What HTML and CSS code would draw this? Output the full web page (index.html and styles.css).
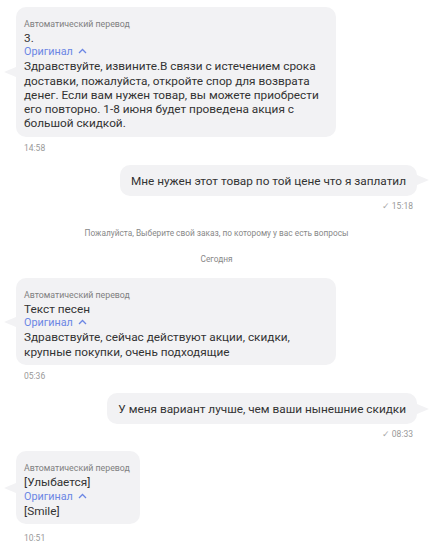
FILE: index.html
```html
<!DOCTYPE html>
<html lang="ru">
<head>
  <meta charset="UTF-8">
  <meta name="viewport" content="width=device-width, initial-scale=1">
  <title>Чат</title>
  <link rel="stylesheet" href="styles.css">
</head>
<body>

  <div class="chat">

    <div class="msg msg-in">
      <div class="bubble">
        <div class="caption">Автоматический перевод</div>
        <div class="text">3.</div>
        <div class="original">Оригинал <svg class="caret" width="9" height="6" viewBox="0 0 9 6"><path d="M1 5 L4.5 1.5 L8 5" fill="none" stroke="currentColor" stroke-width="1.3"/></svg></div>
        <div class="text">Здравствуйте, извините.В связи с истечением срока доставки, пожалуйста, откройте спор для возврата денег. Если вам нужен товар, вы можете приобрести его повторно. 1-8 июня будет проведена акция с большой скидкой.</div>
      </div>
      <div class="time">14:58</div>
    </div>

    <div class="msg msg-out">
      <div class="bubble">
        <div class="text">Мне нужен этот товар по той цене что я заплатил</div>
      </div>
      <div class="time"><span class="check">✓</span> 15:18</div>
    </div>

    <div class="system">Пожалуйста, Выберите свой заказ, по которому у вас есть вопросы</div>
    <div class="system day">Сегодня</div>

    <div class="msg msg-in">
      <div class="bubble">
        <div class="caption">Автоматический перевод</div>
        <div class="text">Текст песен</div>
        <div class="original">Оригинал <svg class="caret" width="9" height="6" viewBox="0 0 9 6"><path d="M1 5 L4.5 1.5 L8 5" fill="none" stroke="currentColor" stroke-width="1.3"/></svg></div>
        <div class="text">Здравствуйте, сейчас действуют акции, скидки, крупные покупки, очень подходящие</div>
      </div>
      <div class="time">05:36</div>
    </div>

    <div class="msg msg-out">
      <div class="bubble">
        <div class="text">У меня вариант лучше, чем ваши нынешние скидки</div>
      </div>
      <div class="time"><span class="check">✓</span> 08:33</div>
    </div>

    <div class="msg msg-in">
      <div class="bubble">
        <div class="caption">Автоматический перевод</div>
        <div class="text">[Улыбается]</div>
        <div class="original">Оригинал <svg class="caret" width="9" height="6" viewBox="0 0 9 6"><path d="M1 5 L4.5 1.5 L8 5" fill="none" stroke="currentColor" stroke-width="1.3"/></svg></div>
        <div class="text">[Smile]</div>
      </div>
      <div class="time">10:51</div>
    </div>

  </div>

</body>
</html>
```

FILE: styles.css
```css
body {
  margin: 0;
  background-color: #fff;
  font-family: Roboto, "Liberation Sans", sans-serif;
  color: #333;
}
.chat {
  display: flex;
  flex-direction: column;
  padding: 7px 17px 0 16px;
}
.msg {
  display: flex;
  flex-direction: column;
  max-width: 320px;
}
.msg-in {
  align-self: flex-start;
  align-items: flex-start;
}
.msg-out {
  align-self: flex-end;
  align-items: flex-end;
}
.bubble {
  position: relative;
  background-color: #f2f2f4;
  border-radius: 10px;
  padding: 11px 10px 6px 8px;
}
.bubble::before {
  content: "";
  position: absolute;
  top: 50%;
  margin-top: -5px;
  border-top: 5px solid transparent;
  border-bottom: 5px solid transparent;
}
.msg-in .bubble::before {
  left: -12px;
  border-right: 12px solid #f2f2f4;
}
.msg-out .bubble {
  padding: 9px 11px 8px 11px;
}
.msg-out .bubble::before {
  right: -12px;
  border-left: 12px solid #f2f2f4;
}
.caption {
  font-size: 8.8px;
  line-height: 13px;
  color: #808080;
}
.text {
  font-size: 11.8px;
  line-height: 14.3px;
  color: #333;
}
.original {
  font-size: 10.8px;
  line-height: 14px;
  color: #6b86e4;
}
.caret {
  margin-left: 2px;
  vertical-align: 1px;
}
.time {
  font-size: 8.5px;
  color: #999;
  margin: 6px 0 12px 8px;
}
.msg-in:last-child .time {
  margin-top: 9px;
}
.msg-out .time {
  margin: 5px 4px 12px 0;
}
.check {
  color: #aaa;
}
.system {
  align-self: center;
  font-size: 8.3px;
  color: #888;
  margin: 5px 0 16px;
}
.system.day {
  margin: 0 0 14px;
}
```
